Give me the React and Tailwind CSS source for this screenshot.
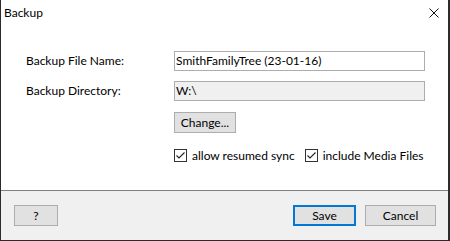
import React from "react";

const font = { fontFamily: 'Lato, "Noto Sans", sans-serif' };

function Check({ label }) {
  return (
    <div className="flex items-center">
      <div className="w-[13px] h-[13px] border border-[#333333] bg-white flex items-center justify-center">
        <svg width="11" height="11" viewBox="0 0 11 11">
          <path d="M1.5 5.5 L4 8 L9.5 2.5" fill="none" stroke="#222" strokeWidth="1.1" />
        </svg>
      </div>
      <span className="ml-[5px] text-[12px] leading-none text-black">{label}</span>
    </div>
  );
}

export default function App() {
  return (
    <div
      className="w-[450px] h-[241px] bg-white border-l border-r-2 border-b border-[#2b2b2b] flex flex-col text-black"
      style={font}
    >
      <div className="h-[26px] flex items-center justify-between pl-[3px] pr-[9px]">
        <span className="text-[12px] leading-none">Backup</span>
        <svg width="10" height="10" viewBox="0 0 10 10">
          <path d="M0.5 0.5 L9.5 9.5 M9.5 0.5 L0.5 9.5" stroke="#111" strokeWidth="1" />
        </svg>
      </div>
      <div className="flex-1 flex flex-col pl-[25px] pt-[25px]">
        <div className="flex items-center h-[20px]">
          <span className="w-[148px] text-[12px] leading-none">Backup File Name:</span>
          <div className="w-[251px] h-[20px] border border-[#adadad] bg-white flex items-center pl-[1px] text-[12px] leading-none">
            SmithFamilyTree (23-01-16)
          </div>
        </div>
        <div className="flex items-center h-[20px] mt-[10px]">
          <span className="w-[148px] text-[12px] leading-none">Backup Directory:</span>
          <div className="w-[251px] h-[20px] border border-[#adadad] bg-[#f0f0f0] flex items-center pl-[1px] text-[12px] leading-none">
            W:\
          </div>
        </div>
        <div className="flex mt-[11px] pl-[148px]">
          <div className="w-[62px] h-[21px] border border-[#adadad] bg-[#e1e1e1] flex items-center justify-center text-[12px] leading-none">
            Change...
          </div>
        </div>
        <div className="flex mt-[16px] pl-[148px] gap-[10px]">
          <Check label="allow resumed sync" />
          <Check label="include Media Files" />
        </div>
      </div>
      <div className="h-[50px] border-t border-[#808080] bg-[#f0f0f0] flex items-start pt-[14px] pl-[13px] pr-[12px]">
        <div className="w-[44px] h-[21px] border border-[#adadad] bg-[#e1e1e1] flex items-center justify-center text-[12px] leading-none">
          ?
        </div>
        <div className="flex-1" />
        <div className="w-[63px] h-[21px] border-2 border-[#0078d7] bg-[#e1e1e1] flex items-center justify-center text-[12px] leading-none">
          Save
        </div>
        <div className="w-[71px] h-[21px] ml-[9px] border border-[#adadad] bg-[#e1e1e1] flex items-center justify-center text-[12px] leading-none">
          Cancel
        </div>
      </div>
    </div>
  );
}
